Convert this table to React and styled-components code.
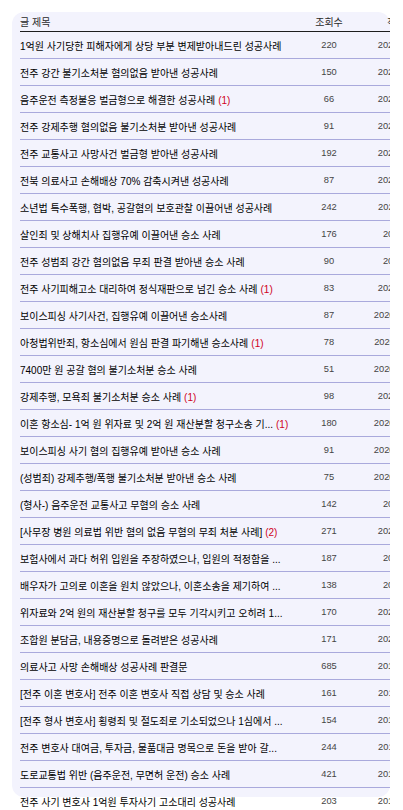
import styled, { createGlobalStyle } from "styled-components";

const posts = [
  { title: "1억원 사기당한 피해자에게 상당 부분 변제받아내드린 성공사례", views: 220, date: "2023.05.12" },
  { title: "전주 강간 불기소처분 혐의없음 받아낸 성공사례", views: 150, date: "2023.04.27" },
  { title: "음주운전 측정불응 벌금형으로 해결한 성공사례", comments: 1, views: 66, date: "2023.03.16" },
  { title: "전주 강제추행 혐의없음 불기소처분 받아낸 성공사례", views: 91, date: "2023.02.21" },
  { title: "전주 교통사고 사망사건 벌금형 받아낸 성공사례", views: 192, date: "2023.01.30" },
  { title: "전북 의료사고 손해배상 70% 감축시켜낸 성공사례", views: 87, date: "2022.12.14" },
  { title: "소년법 특수폭행, 협박, 공갈혐의 보호관찰 이끌어낸 성공사례", views: 242, date: "2022.11.08" },
  { title: "살인죄 및 상해치사 집행유예 이끌어낸 승소 사례", views: 176, date: "2021.9.7" },
  { title: "전주 성범죄 강간 혐의없음 무죄 판결 받아낸 승소 사례", views: 90, date: "2021.8.3" },
  { title: "전주 사기피해고소 대리하여 정식재판으로 넘긴 승소 사례", comments: 1, views: 83, date: "2021.06.22" },
  { title: "보이스피싱 사기사건, 집행유예 이끌어낸 승소사례", views: 87, date: "2020. 12. 18." },
  { title: "아청법위반죄, 항소심에서 원심 판결 파기해낸 승소사례", comments: 1, views: 78, date: "2020. 11. 26." },
  { title: "7400만 원 공갈 혐의 불기소처분 승소 사례", views: 51, date: "2020. 10. 19." },
  { title: "강제추행, 모욕죄 불기소처분 승소 사례", comments: 1, views: 98, date: "2020.09.29" },
  { title: "이혼 항소심- 1억 원 위자료 및 2억 원 재산분할 청구소송 기...", comments: 1, views: 180, date: "2020. 08. 31." },
  { title: "보이스피싱 사기 혐의 집행유예 받아낸 승소 사례", views: 91, date: "2020. 07. 14." },
  { title: "(성범죄) 강제추행/폭행 불기소처분 받아낸 승소 사례", views: 75, date: "2020. 06. 02." },
  { title: "(형사-) 음주운전 교통사고 무혐의 승소 사례", views: 142, date: "2020.5.8" },
  { title: "[사무장 병원 의료법 위반 혐의 없음 무혐의 무죄 처분 사례]", comments: 2, views: 271, date: "2020.04.16" },
  { title: "보험사에서 과다 허위 입원을 주장하였으나, 입원의 적정함을 ...", views: 187, date: "2020.3.9" },
  { title: "배우자가 고의로 이혼을 원치 않았으나, 이혼소송을 제기하여 ...", views: 138, date: "2020.2.4" },
  { title: "위자료와 2억 원의 재산분할 청구를 모두 기각시키고 오히려 1...", views: 170, date: "2020.01.21" },
  { title: "조합원 분담금, 내용증명으로 돌려받은 성공사례", views: 171, date: "2020.01.06" },
  { title: "의료사고 사망 손해배상 성공사례 판결문", views: 685, date: "2019.12.17" },
  { title: "[전주 이혼 변호사] 전주 이혼 변호사 직접 상담 및 승소 사례", views: 161, date: "2019.11.25" },
  { title: "[전주 형사 변호사] 횡령죄 및 절도죄로 기소되었으나 1심에서 ...", views: 154, date: "2019.10.30" },
  { title: "전주 변호사 대여금, 투자금, 물품대금 명목으로 돈을 받아 갈...", views: 244, date: "2019.10.11" },
  { title: "도로교통법 위반 (음주운전, 무면허 운전) 승소 사례", views: 421, date: "2019.09.19" },
  { title: "전주 사기 변호사 1억원 투자사기 고소대리 성공사례", views: 203, date: "2019.08.27" },
  { title: "전주 형사 변호사 특수상해 혐의 집행유예 받아낸 승소 사례", views: 188, date: "2019.08.02" },
];

const Global = createGlobalStyle`
  html, body {
    margin: 0;
    background: #fff;
  }
  body {
    font-family: "Liberation Sans", "Noto Sans CJK KR", sans-serif;
  }
  ::-webkit-scrollbar {
    display: none;
  }
`;

const Page = styled.div`
  box-sizing: border-box;
  min-height: 850px;
  padding: 12px 13px 0 12px;
`;

const Board = styled.section`
  box-sizing: border-box;
  height: 785px;
  background: #f3f3fd;
  border-radius: 12px;
  padding-left: 8px;
`;

/* clips the wide table at the card's right edge; height stays auto */
const Scroller = styled.div`
  overflow: hidden;
`;

const List = styled.div`
  width: 424px;
`;

const Row = styled.div`
  display: grid;
  grid-template-columns: 280px 58px 86px;
  align-items: center;
  box-sizing: border-box;
  height: 27px;
  border-bottom: 1px solid #a9a9dc;
  font-size: 10px;
`;

const HeadRow = styled(Row)`
  height: 20px;
  padding-bottom: 1px;
  border-bottom: 1px solid #1e1e1e;
  color: #2a2a2a;
`;

const Cell = styled.div`
  text-align: ${(p) => (p.$align ? p.$align : "left")};
  white-space: nowrap;
  overflow: hidden;
`;

const Title = styled(Cell)`
  color: #000;
`;

const Comments = styled.span`
  color: #d0021b;
  margin-left: 3px;
`;

const Num = styled(Cell)`
  color: #444;
  font-size: 9.3px;
`;

const App = () => {
  return (
    <Page>
      <Global />
      <Board>
        <Scroller>
          <List>
            <HeadRow>
              <Cell>글 제목</Cell>
              <Cell $align="center">조회수</Cell>
              <Cell $align="center">작성일</Cell>
            </HeadRow>
            {posts.map((p, i) => (
              <Row key={i}>
                <Title>
                  {p.title}
                  {p.comments ? <Comments>({p.comments})</Comments> : null}
                </Title>
                <Num $align="center">{p.views}</Num>
                <Num $align="center">{p.date}</Num>
              </Row>
            ))}
          </List>
        </Scroller>
      </Board>
    </Page>
  );
};

export default App;
